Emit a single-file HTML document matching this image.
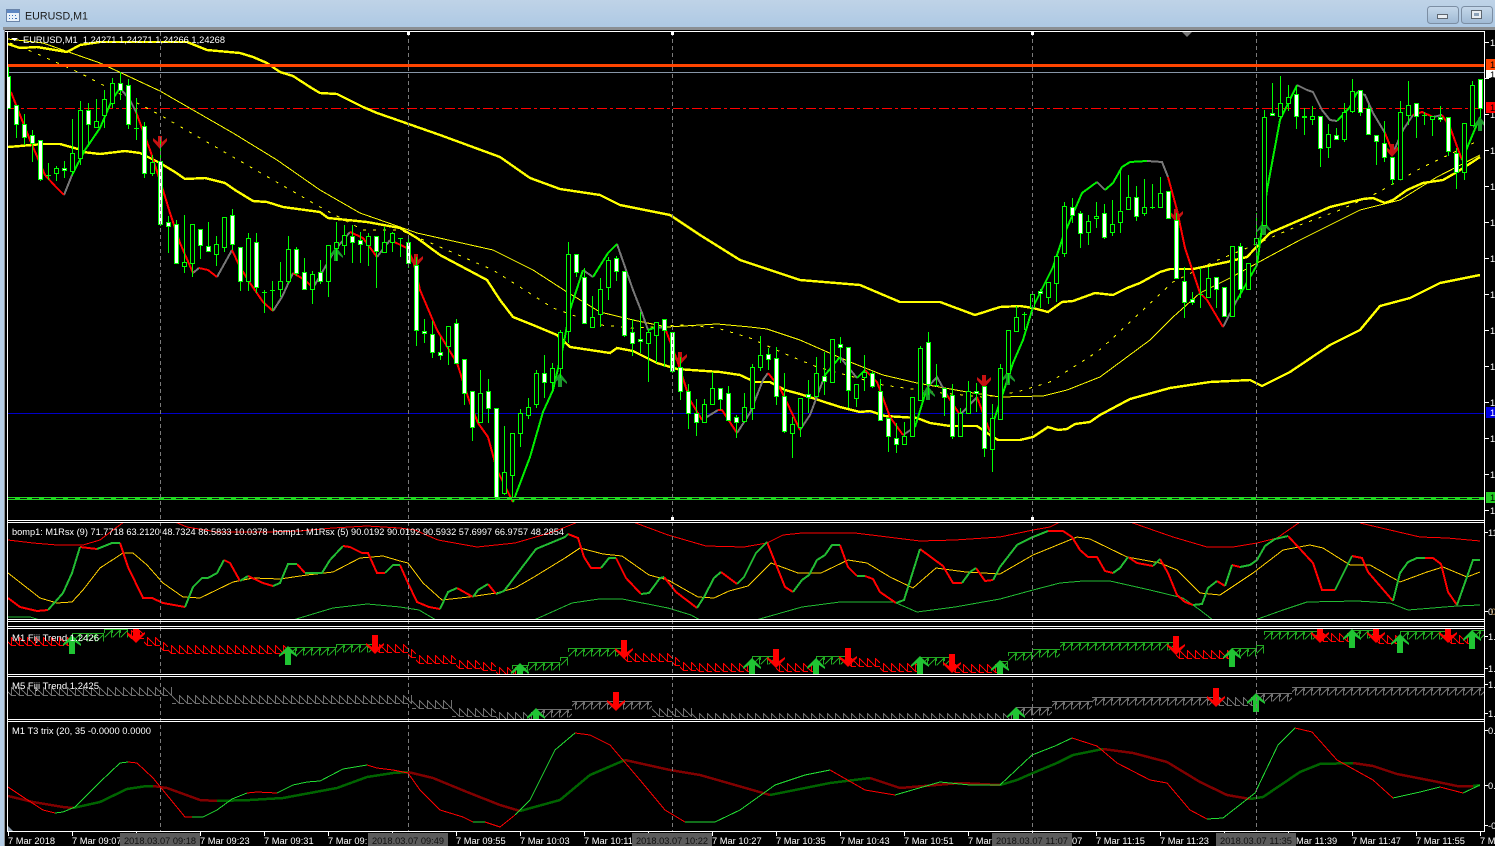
<!DOCTYPE html>
<html><head><meta charset="utf-8"><title>EURUSD,M1</title>
<style>
html,body{margin:0;padding:0;width:1495px;height:846px;overflow:hidden;background:#000}
svg{display:block}
text{font-family:"Liberation Sans",sans-serif;font-size:9.3px;fill:#fff;white-space:pre}
.l{fill:none;shape-rendering:crispEdges}
.p{fill:none;shape-rendering:crispEdges;stroke-width:1}
</style></head><body>
<svg width="1495" height="846" viewBox="0 0 1495 846" xmlns="http://www.w3.org/2000/svg">
<defs>
<linearGradient id="tb" x1="0" y1="0" x2="0" y2="1"><stop offset="0" stop-color="#bfd3e7"/><stop offset="1" stop-color="#aec9e4"/></linearGradient>
<linearGradient id="bt" x1="0" y1="0" x2="0" y2="1"><stop offset="0" stop-color="#c6d8ea"/><stop offset=".5" stop-color="#b2c9df"/><stop offset="1" stop-color="#9fb9d4"/></linearGradient>
<clipPath id="c1"><rect x="8" y="32" width="1476" height="488"/></clipPath>
<clipPath id="c2"><rect x="8" y="523" width="1476" height="96"/></clipPath>
<clipPath id="c3"><rect x="8" y="629" width="1476" height="45"/></clipPath>
<clipPath id="c4"><rect x="8" y="677" width="1476" height="42"/></clipPath>
<clipPath id="c5"><rect x="8" y="722" width="1476" height="109"/></clipPath>
<pattern id="fr" patternUnits="userSpaceOnUse" width="8" height="10"><path class="p" d="M3.5 0V8.5H8M3.5 .5L8 5M0 5L3.5 8.5" stroke="#f00"/></pattern>
<pattern id="fg" patternUnits="userSpaceOnUse" width="8" height="10"><path class="p" d="M.5 8.5L7.5 1.5V8.5M0 .5H8M.5 .5V4" stroke="#22a822"/></pattern>
<pattern id="fk" patternUnits="userSpaceOnUse" width="8" height="10"><path class="p" d="M3.5 0V8.5H8M3.5 .5L8 5M0 5L3.5 8.5" stroke="#707070"/></pattern>
<pattern id="fh" patternUnits="userSpaceOnUse" width="8" height="10"><path class="p" d="M.5 8.5L7.5 1.5V8.5M0 .5H8M.5 .5V4" stroke="#707070"/></pattern>
<path id="au" d="M0 0L9 9V11L3 7V19H-3V7L-9 11V9Z" fill="#20c433"/>
<path id="ad" d="M0 0L-9 -9V-11L-3 -7V-19H3V-7L9 -11V-9Z" fill="#f00"/>
<path id="su" d="M0 0L7 9V11L2 7V14H-2V7L-7 11V9Z" fill="#1c9a2c"/>
<path id="sd" d="M0 0L-7 -8V-11L-2 -7V-13H2V-7L7 -11V-8Z" fill="#c81212"/>
</defs>

<rect width="1495" height="846" fill="#000"/>
<!-- title bar -->
<rect width="1495" height="27" fill="url(#tb)"/>
<rect x="0" y="27" width="5" height="819" fill="#b5cde5"/>
<rect x="3" y="27" width="1492" height="3" fill="#8b8f93"/>
<rect x="4" y="27" width="1" height="819" fill="#8b8f93"/>
<g>
<rect x="6.5" y="9.5" width="13" height="12" fill="#e8f1fa" stroke="#6a84a8"/>
<rect x="7" y="10" width="12" height="3" fill="#5e88c4"/>
<path d="M9 15h1v1h-1zM12 15h1v1h-1zM15 15h1v1h-1zM9 18h1v1h-1zM12 18h1v1h-1zM15 18h2v1h-2z" fill="#3b6fb8"/>
</g>
<text x="25" y="19.5" style="font-size:11px;fill:#1a1a1a" textLength="63" lengthAdjust="spacingAndGlyphs">EURUSD,M1</text>
<rect x="1427.5" y="6.5" width="31" height="17" rx="3" fill="url(#bt)" stroke="#7c8ea3"/>
<rect x="1437.5" y="14.5" width="10" height="4" fill="#e8edf2" stroke="#5d6670"/>
<rect x="1461.5" y="6.5" width="31" height="17" rx="3" fill="url(#bt)" stroke="#7c8ea3"/>
<rect x="1471.5" y="10.5" width="10" height="8" fill="#e8edf2" stroke="#5d6670"/>
<rect x="1474" y="13" width="5" height="3" fill="#8da3ba"/>

<!-- MAIN CHART -->
<g clip-path="url(#c1)">
<path class="l" d="M8 72.5H1484" stroke="#8796a8"/>
<path class="l" d="M8 108.5H1484" stroke="#f00" stroke-dasharray="10 3 3 3"/>
<path class="l" d="M8 413.5H1484" stroke="#0000c8"/>
<!-- thin yellow -->
<path class="l" stroke="#ffff00" d="M8 39L43 43L100 63L160 91L233 133L277 160L320 190L360 213L400 227L417 233L493 250L533 270L567 292L600 312L633 320L667 327L717 324L750 327L767 329L800 340L850 362L883 375L917 383L967 392L1000 397L1043 396L1067 390L1100 377L1150 340L1173 317L1200 293L1230 278L1270 256L1300 240L1360 210L1400 200L1437 177L1480 155"/>
<path class="l" stroke="#ffff00" stroke-dasharray="3 7" d="M10 43L33 52L80 73L160 115L233 157L320 207L363 230L400 230L440 247L493 270L553 308L600 325L633 328L683 325L717 328L750 338L783 353L817 367L883 385L933 392L983 397L1017 392L1050 382L1097 352L1113 338L1173 282L1213 262L1247 248L1300 225L1340 210L1377 193L1423 167L1480 140"/>
<!-- thick yellow -->
<path class="l" stroke="#ffff00" stroke-width="2.4" d="M8 44L20 48L37 47L67 52L80 45L100 42L187 42L207 50L240 53L253 57L267 63L280 72L293 76L310 87L320 93L337 94L363 107L377 113L400 121L440 135L500 157L530 178L560 189L600 195L620 205L670 215L700 235L740 260L800 280L860 285L900 302L940 302L975 315L1000 307L1020 306L1033 308L1048 312L1062 302L1073 301L1095 293L1113 295L1127 288L1140 283L1160 272L1170 269L1193 269L1227 262L1247 257L1263 240L1270 233L1300 220L1330 207L1363 199L1373 198L1385 203L1393 200L1407 190L1423 183L1443 180L1457 172L1480 157"/>
<path class="l" stroke="#ffff00" stroke-width="2.4" d="M8 147L20 146L43 144L60 144L78 149L83 152L100 154L125 151L140 153L160 163L175 172L185 179L205 178L225 183L235 190L253 201L267 202L283 207L320 212L328 218L367 222L400 228L417 238L440 255L487 280L500 300L513 317L533 325L557 335L570 347L610 353L617 348L633 351L657 363L677 369L720 372L740 375L755 382L770 382L785 390L800 394L840 407L860 412L870 411L885 416L917 418L930 423L950 426L977 426L990 435L998 440L1020 440L1033 437L1048 427L1058 430L1067 429L1075 424L1090 422L1100 415L1130 399L1170 388L1210 382L1250 380L1262 386L1290 372L1330 345L1360 330L1380 306L1410 298L1440 283L1480 275"/>
<!-- zigzag -->
<path class="l" stroke="#777" stroke-width="2" d="M64 195L72 175M120 88L130 100L136 112M193 273L199 268M217 277L232 250M273 311L282 297L293 273M313 288L335 250L350 232M377 257L390 240M583 270L593 277M617 244L633 290L642 313L648 330M657 327L665 328M702 420L718 410M737 433L750 413L763 380L768 373M800 430L810 415L825 375M840 357L857 378M903 435L915 427M927 388L937 377L947 395M960 415L977 397M1097 182L1105 190M1147 161L1162 162L1168 177M1223 327L1237 300M1297 85L1307 90L1313 92L1322 110L1330 120L1337 121M1357 92L1365 95L1373 113L1385 133M1393 153L1403 130L1413 115M1433 117L1442 115"/>
<path class="l" stroke="#f00" stroke-width="2" d="M11 92L20 115L30 140L45 175L56 187L64 195M136 112L150 150L163 190L170 213L180 243L193 273M199 268L208 270L217 277M232 250L240 267L250 283L263 302L273 311M293 273L305 280L313 288M350 232L363 238L377 257M390 240L407 248L413 260L420 290L437 330L457 363L470 403L478 423L488 437L497 470L513 502M665 328L677 360L690 400L702 420M718 410L722 410L737 433M768 373L780 388L800 430M865 370L877 382L890 417L903 435M947 395L960 415M977 397L990 432M1168 177L1177 210L1185 248L1200 293L1207 300L1223 327M1385 133L1393 153M1413 115L1422 112L1433 117M1442 115L1450 127L1462 160"/>
<path class="l" stroke="#00f000" stroke-width="2" d="M72 175L85 150L100 128L112 100L120 88M513 502L530 457L543 412L553 390L563 347L570 310L583 270M593 277L608 253L617 244M648 330L657 327M825 375L840 357M857 378L865 370M915 427L927 388M990 432L1013 363L1023 340L1033 307L1053 267L1063 237L1082 193L1097 182M1105 190L1113 183L1122 167L1130 162L1147 161M1237 300L1257 265L1267 190L1280 120L1297 85M1337 121L1350 107L1357 92M1462 160L1480 117"/>
<!-- small arrows -->
<use href="#sd" x="160" y="149"/><use href="#sd" x="416" y="267"/><use href="#sd" x="680" y="365"/><use href="#sd" x="984" y="388"/><use href="#sd" x="1176" y="222"/><use href="#sd" x="1392" y="157"/>
<use href="#su" x="336" y="247"/><use href="#su" x="560" y="373"/><use href="#su" x="928" y="386"/><use href="#su" x="1008" y="371"/><use href="#su" x="1264" y="221"/><use href="#su" x="1480" y="117"/>
<!-- wicks -->
<path class="l" stroke="#00ff00" d="M8.5 64V108M16.5 105V138M24.5 114V145M32.5 130V162M40.5 140V181M48.5 163V180M56.5 166V181M64.5 161V178M72.5 119V176M80.5 101V165M88.5 103V145M96.5 99V128M104.5 90V128M112.5 78V108M120.5 72V100M128.5 79V129M136.5 98V140M144.5 122V178M152.5 155V176M160.5 140V226M168.5 216V253M176.5 220V263M184.5 215V273M192.5 224V277M200.5 229V259M208.5 222V251M216.5 236V266M224.5 217V252M232.5 209V250M240.5 247V291M248.5 233V291M256.5 233V293M264.5 290V313M272.5 281V311M280.5 262V297M288.5 236V284M296.5 247V276M304.5 258V289M312.5 271V304M320.5 260V284M328.5 245V297M336.5 222V261M344.5 225V255M352.5 225V263M360.5 232V263M368.5 233V266M376.5 236V288M384.5 227V252M392.5 232V252M400.5 238V257M408.5 238V268M416.5 257V346M424.5 319V343M432.5 321V358M440.5 337V360M448.5 326V365M456.5 319V363M464.5 359V405M472.5 391V441M480.5 370V422M488.5 379V423M496.5 408V498M504.5 426V495M512.5 433V497M520.5 409V447M528.5 398V419M536.5 370V408M544.5 355V398M552.5 363V393M560.5 330V378M568.5 242V343M576.5 254V277M584.5 268V323M592.5 296V327M600.5 278V327M608.5 257V300M616.5 256V281M624.5 271V337M632.5 319V356M640.5 312V353M648.5 330V382M656.5 322V363M664.5 319V367M672.5 332V373M680.5 357V400M688.5 384V429M696.5 399V436M704.5 399V422M712.5 372V404M720.5 388V410M728.5 386V420M736.5 415V438M744.5 393V423M752.5 364V420M760.5 336V371M768.5 348V370M776.5 347V405M784.5 373V433M792.5 417V458M800.5 398V437M808.5 380V413M816.5 357V396M824.5 352V395M832.5 339V382M840.5 337V363M848.5 347V408M856.5 384V407M864.5 355V391M872.5 371V388M880.5 379V420M888.5 418V452M896.5 423V453M904.5 422V444M912.5 397V436M920.5 346V400M928.5 332V395M936.5 364V387M944.5 388V416M952.5 384V439M960.5 408V436M968.5 381V413M976.5 383V412M984.5 386V457M992.5 404V472M1000.5 364V419M1008.5 330V383M1016.5 306V331M1024.5 312V330M1032.5 294V307M1040.5 289V308M1048.5 282V304M1056.5 256V302M1064.5 202V257M1072.5 198V223M1080.5 211V248M1088.5 215V245M1096.5 202V228M1104.5 204V239M1112.5 200V236M1120.5 168V233M1128.5 175V209M1136.5 186V221M1144.5 179V216M1152.5 184V209M1160.5 177V207M1168.5 191V218M1176.5 213V278M1184.5 267V318M1192.5 292V305M1200.5 268V308M1208.5 267V297M1216.5 277V308M1224.5 287V316M1232.5 246V316M1240.5 243V298M1248.5 263V289M1256.5 213V265M1264.5 110V225M1272.5 83V115M1280.5 76V120M1288.5 85V111M1296.5 85V129M1304.5 108V135M1312.5 106V125M1320.5 116V167M1328.5 124V158M1336.5 128V139M1344.5 103V142M1352.5 79V113M1360.5 90V116M1368.5 105V134M1376.5 135V165M1384.5 121V162M1392.5 157V185M1400.5 101V179M1408.5 81V125M1416.5 103V138M1424.5 112V125M1432.5 116V136M1440.5 106V122M1448.5 117V156M1456.5 148V189M1464.5 123V180M1472.5 81V125M1480.5 79V118"/>
<!-- dojis -->
<path class="l" stroke="#00ff00" d="M46 175.5h5M134 128.5h5M262 292.5h5M270 290.5h5M398 238.5h5M934 385.5h5M1022 314.5h5M1150 207.5h5M1198 294.5h5M1422 115.5h5"/>
<!-- black bodies -->
<path fill="#000" stroke="#00ff00" style="shape-rendering:crispEdges" d="M54.5 168.5h4v5h-4zM70.5 153.5h4v18h-4zM78.5 110.5h4v48h-4zM94.5 121.5h4v6h-4zM102.5 99.5h4v16h-4zM110.5 83.5h4v20h-4zM150.5 162.5h4v11h-4zM182.5 262.5h4v4h-4zM190.5 224.5h4v39h-4zM214.5 244.5h4v10h-4zM222.5 217.5h4v30h-4zM246.5 238.5h4v43h-4zM278.5 281.5h4v8h-4zM286.5 249.5h4v32h-4zM310.5 274.5h4v15h-4zM326.5 245.5h4v36h-4zM334.5 242.5h4v6h-4zM342.5 235.5h4v10h-4zM366.5 236.5h4v9h-4zM382.5 242.5h4v10h-4zM390.5 233.5h4v9h-4zM446.5 326.5h4v20h-4zM478.5 393.5h4v29h-4zM502.5 472.5h4v21h-4zM510.5 433.5h4v42h-4zM518.5 413.5h4v20h-4zM526.5 407.5h4v8h-4zM534.5 373.5h4v31h-4zM550.5 368.5h4v14h-4zM558.5 332.5h4v36h-4zM566.5 254.5h4v77h-4zM590.5 317.5h4v10h-4zM598.5 289.5h4v25h-4zM606.5 260.5h4v27h-4zM646.5 332.5h4v11h-4zM654.5 322.5h4v13h-4zM702.5 404.5h4v18h-4zM710.5 388.5h4v16h-4zM742.5 407.5h4v14h-4zM750.5 367.5h4v41h-4zM758.5 355.5h4v12h-4zM790.5 424.5h4v9h-4zM798.5 398.5h4v29h-4zM814.5 373.5h4v23h-4zM830.5 339.5h4v43h-4zM854.5 384.5h4v14h-4zM862.5 372.5h4v5h-4zM902.5 436.5h4v8h-4zM910.5 397.5h4v39h-4zM918.5 348.5h4v52h-4zM958.5 413.5h4v23h-4zM966.5 391.5h4v22h-4zM990.5 418.5h4v31h-4zM998.5 368.5h4v51h-4zM1006.5 330.5h4v43h-4zM1014.5 317.5h4v14h-4zM1030.5 294.5h4v13h-4zM1046.5 282.5h4v15h-4zM1054.5 256.5h4v27h-4zM1062.5 206.5h4v47h-4zM1086.5 221.5h4v11h-4zM1094.5 216.5h4v2h-4zM1110.5 224.5h4v8h-4zM1118.5 211.5h4v11h-4zM1126.5 197.5h4v12h-4zM1142.5 207.5h4v6h-4zM1158.5 193.5h4v14h-4zM1206.5 278.5h4v19h-4zM1230.5 246.5h4v70h-4zM1246.5 263.5h4v26h-4zM1254.5 238.5h4v6h-4zM1262.5 117.5h4v108h-4zM1278.5 103.5h4v13h-4zM1286.5 97.5h4v6h-4zM1310.5 116.5h4v3h-4zM1326.5 134.5h4v13h-4zM1342.5 112.5h4v27h-4zM1350.5 91.5h4v20h-4zM1398.5 112.5h4v67h-4zM1406.5 105.5h4v10h-4zM1430.5 116.5h4v3h-4zM1462.5 123.5h4v49h-4zM1470.5 85.5h4v40h-4z"/>
<!-- white bodies -->
<path fill="#fff" stroke="#00ff00" style="shape-rendering:crispEdges" d="M6.5 76.5h4v32h-4zM14.5 105.5h4v19h-4zM22.5 124.5h4v13h-4zM30.5 135.5h4v8h-4zM38.5 140.5h4v39h-4zM62.5 168.5h4v2h-4zM86.5 110.5h4v14h-4zM118.5 83.5h4v7h-4zM126.5 85.5h4v39h-4zM142.5 126.5h4v47h-4zM158.5 161.5h4v63h-4zM166.5 222.5h4v4h-4zM174.5 224.5h4v39h-4zM198.5 229.5h4v16h-4zM206.5 246.5h4v5h-4zM230.5 215.5h4v29h-4zM238.5 247.5h4v34h-4zM254.5 242.5h4v45h-4zM294.5 249.5h4v24h-4zM302.5 272.5h4v17h-4zM318.5 272.5h4v9h-4zM350.5 236.5h4v6h-4zM358.5 240.5h4v4h-4zM374.5 236.5h4v15h-4zM406.5 242.5h4v21h-4zM414.5 265.5h4v65h-4zM422.5 331.5h4v2h-4zM430.5 334.5h4v18h-4zM438.5 352.5h4v3h-4zM454.5 323.5h4v40h-4zM462.5 359.5h4v34h-4zM470.5 391.5h4v36h-4zM486.5 391.5h4v17h-4zM494.5 408.5h4v90h-4zM542.5 373.5h4v9h-4zM574.5 254.5h4v18h-4zM582.5 277.5h4v46h-4zM614.5 258.5h4v13h-4zM622.5 271.5h4v64h-4zM630.5 332.5h4v11h-4zM638.5 339.5h4v2h-4zM662.5 319.5h4v11h-4zM670.5 332.5h4v39h-4zM678.5 367.5h4v24h-4zM686.5 391.5h4v22h-4zM694.5 413.5h4v9h-4zM718.5 388.5h4v11h-4zM726.5 393.5h4v27h-4zM734.5 417.5h4v5h-4zM766.5 354.5h4v5h-4zM774.5 358.5h4v38h-4zM782.5 396.5h4v35h-4zM806.5 394.5h4v3h-4zM822.5 376.5h4v5h-4zM838.5 344.5h4v3h-4zM846.5 347.5h4v43h-4zM870.5 373.5h4v13h-4zM878.5 391.5h4v29h-4zM886.5 418.5h4v18h-4zM894.5 438.5h4v6h-4zM926.5 342.5h4v42h-4zM942.5 388.5h4v9h-4zM950.5 395.5h4v41h-4zM974.5 391.5h4v2h-4zM982.5 386.5h4v62h-4zM1038.5 291.5h4v2h-4zM1070.5 207.5h4v8h-4zM1078.5 213.5h4v20h-4zM1102.5 213.5h4v24h-4zM1134.5 197.5h4v19h-4zM1166.5 191.5h4v27h-4zM1174.5 220.5h4v58h-4zM1182.5 281.5h4v21h-4zM1190.5 299.5h4v3h-4zM1214.5 277.5h4v12h-4zM1222.5 287.5h4v29h-4zM1238.5 246.5h4v43h-4zM1270.5 113.5h4v2h-4zM1294.5 94.5h4v22h-4zM1302.5 116.5h4v1h-4zM1318.5 116.5h4v32h-4zM1334.5 135.5h4v4h-4zM1358.5 90.5h4v22h-4zM1366.5 108.5h4v26h-4zM1374.5 135.5h4v6h-4zM1382.5 143.5h4v14h-4zM1390.5 157.5h4v22h-4zM1414.5 103.5h4v13h-4zM1438.5 117.5h4v2h-4zM1446.5 117.5h4v34h-4zM1454.5 153.5h4v19h-4zM1478.5 79.5h4v29h-4z"/>
<rect x="8" y="64" width="1476" height="3" fill="#ff4500"/>
<rect x="8" y="497" width="1476" height="3" fill="#22dd22"/>
<path class="l" d="M8 498.5H1484" stroke="#111" stroke-dasharray="7 5"/>
</g>

<!-- PANEL 2 RSX -->
<g clip-path="url(#c2)">
<path class="l" stroke="#f00" d="M8 540L33 543L57 545L83 545L100 540L113 530L124 522M175 522L187 527L217 532L267 532L300 531L333 528L367 526L400 528L415 530L438 540L477 547L515 543L553 532L578 522M633 522L668 535L706 546L744 547L767 543L783 535L802 533L855 533L920 541L955 540L1000 537L1033 530L1050 527L1060 522M1130 522L1173 537L1207 547L1233 547L1257 543L1277 538L1300 522M1360 523L1420 537L1447 538L1480 541"/>
<path class="l" stroke="#ffd000" d="M8 573L40 598L57 603L72 602L83 590L100 568L123 553L133 553L147 565L163 583L183 597L200 598L233 582L253 578L280 579L307 575L333 572L360 558L383 556L400 561L408 563L423 583L442 600L469 597L496 593L515 588L534 577L565 558L580 548L603 554L622 556L649 575L668 580L698 597L714 598L729 591L748 586L771 563L798 573L821 573L848 560L867 563L890 577L913 588L936 568L966 572L1000 574L1033 555L1077 537L1090 539L1127 557L1160 563L1177 570L1200 593L1220 595L1253 573L1283 550L1310 545L1323 548L1350 565L1370 565L1400 582L1427 572L1443 567L1467 577L1480 572"/>
<path class="l" stroke="#22bb33" d="M8 617L30 617L40 620M293 620L333 608L367 604L400 607L419 610L436 620M534 620L572 603L599 599L622 599L668 608L691 615L700 620M756 620L802 607L840 602L894 602L917 612L955 607L1000 599L1033 590L1060 583L1083 581L1110 581L1150 590L1183 598L1200 610L1213 620M1255 620L1283 610L1307 602L1357 601L1390 603L1408 610L1457 606L1480 605"/>
<path class="l" stroke="#f00" stroke-width="2" d="M8 598L20 607L37 611L48 610M80 547L97 549M120 543L128 567L143 598L152 598L163 603L185 607M224 560L230 563L240 581M248 576L263 583L273 586M297 564L305 573M343 546L350 547L362 553L368 553L377 573L385 573M400 565L408 583L417 602L429 607L440 609M457 588L473 597M488 584L496 594M568 534L578 538L584 557L591 568L601 568M616 558L626 578L641 594M664 577L676 592L697 608M721 572L737 584M767 542L785 587L793 592M840 545L848 567L857 576M865 576L873 579L880 592L896 603M920 549L943 566L953 583L962 583M976 568L985 581L993 580M1048 531L1063 531L1072 537L1080 550L1088 557L1097 557L1105 571L1113 573M1128 557L1137 563L1153 566M1160 559L1168 573L1177 595L1185 602L1193 605M1217 581L1225 586M1232 565L1240 567M1288 536L1313 563L1322 590L1335 590M1352 556L1362 558L1368 572L1393 601M1425 558L1433 558L1441 564L1448 592L1457 605"/>
<path class="l" stroke="#22bb33" stroke-width="2" d="M48 610L63 593L72 573L80 547M97 549L112 543L120 543M185 607L193 587L202 578L208 578L217 573L224 560M240 581L248 576M273 586L280 583L288 564L297 564M305 573L322 573L330 560L343 546M385 573L393 565L400 565M440 609L448 592L457 588M473 597L478 590L488 584M496 594L504 591L536 549L565 537L568 534M601 568L609 558L616 558M641 594L649 593L660 578L664 577M697 608L704 597L714 578L721 572M737 584L744 577L756 553L767 542M793 592L802 580L809 575L817 560L825 555L832 545L840 545M857 576L865 576M896 603L904 600L920 549M962 583L970 572L976 568M993 580L1000 567L1017 545L1033 537L1048 531M1113 573L1120 568L1128 557M1153 566L1160 559M1193 605L1202 604L1208 588L1217 581M1225 586L1232 565M1240 567L1250 565L1257 560L1265 546L1275 539L1288 536M1335 590L1352 556M1393 601L1400 573L1408 562L1417 558L1425 558M1457 605L1473 560L1480 560"/>
</g>

<!-- PANEL 3 FIJI M1 -->
<g clip-path="url(#c3)">
<rect transform="translate(0 637)" x="8" width="64" height="10" fill="url(#fr)"/>
<rect transform="translate(0 633)" x="72" width="32" height="10" fill="url(#fg)"/>
<rect transform="translate(0 629)" x="104" width="24" height="10" fill="url(#fg)"/>
<rect transform="translate(0 630)" x="128" width="16" height="10" fill="url(#fr)"/>
<rect transform="translate(0 637)" x="144" width="16" height="10" fill="url(#fr)"/>
<rect transform="translate(0 642)" x="160" width="8" height="10" fill="url(#fr)"/>
<rect transform="translate(0 645)" x="168" width="120" height="10" fill="url(#fr)"/>
<rect transform="translate(0 647)" x="288" width="48" height="10" fill="url(#fg)"/>
<rect transform="translate(0 644)" x="336" width="40" height="10" fill="url(#fg)"/>
<rect transform="translate(0 644)" x="376" width="32" height="10" fill="url(#fr)"/>
<rect transform="translate(0 649)" x="408" width="8" height="10" fill="url(#fr)"/>
<rect transform="translate(0 655)" x="416" width="40" height="10" fill="url(#fr)"/>
<rect transform="translate(0 660)" x="456" width="24" height="10" fill="url(#fr)"/>
<rect transform="translate(0 662)" x="480" width="16" height="10" fill="url(#fr)"/>
<rect transform="translate(0 667)" x="496" width="24" height="10" fill="url(#fr)"/>
<rect transform="translate(0 665)" x="512" width="16" height="10" fill="url(#fg)"/>
<rect transform="translate(0 662)" x="528" width="32" height="10" fill="url(#fg)"/>
<rect transform="translate(0 657)" x="560" width="8" height="10" fill="url(#fg)"/>
<rect transform="translate(0 648)" x="568" width="56" height="10" fill="url(#fg)"/>
<rect transform="translate(0 653)" x="624" width="48" height="10" fill="url(#fr)"/>
<rect transform="translate(0 657)" x="672" width="8" height="10" fill="url(#fr)"/>
<rect transform="translate(0 662)" x="680" width="16" height="10" fill="url(#fr)"/>
<rect transform="translate(0 663)" x="696" width="56" height="10" fill="url(#fr)"/>
<rect transform="translate(0 656)" x="752" width="24" height="10" fill="url(#fg)"/>
<rect transform="translate(0 663)" x="776" width="40" height="10" fill="url(#fr)"/>
<rect transform="translate(0 656)" x="816" width="32" height="10" fill="url(#fg)"/>
<rect transform="translate(0 658)" x="848" width="32" height="10" fill="url(#fr)"/>
<rect transform="translate(0 663)" x="880" width="40" height="10" fill="url(#fr)"/>
<rect transform="translate(0 657)" x="920" width="32" height="10" fill="url(#fg)"/>
<rect transform="translate(0 664)" x="952" width="48" height="10" fill="url(#fr)"/>
<rect transform="translate(0 661)" x="1000" width="8" height="10" fill="url(#fg)"/>
<rect transform="translate(0 652)" x="1008" width="24" height="10" fill="url(#fg)"/>
<rect transform="translate(0 649)" x="1032" width="28" height="10" fill="url(#fg)"/>
<rect transform="translate(0 642)" x="1060" width="116" height="10" fill="url(#fg)"/>
<rect transform="translate(0 650)" x="1176" width="56" height="10" fill="url(#fr)"/>
<rect transform="translate(0 648)" x="1232" width="24" height="10" fill="url(#fg)"/>
<rect transform="translate(0 645)" x="1256" width="8" height="10" fill="url(#fg)"/>
<rect transform="translate(0 631)" x="1264" width="56" height="10" fill="url(#fg)"/>
<rect transform="translate(0 633)" x="1320" width="32" height="10" fill="url(#fr)"/>
<rect transform="translate(0 630)" x="1352" width="24" height="10" fill="url(#fg)"/>
<rect transform="translate(0 635)" x="1376" width="24" height="10" fill="url(#fr)"/>
<rect transform="translate(0 631)" x="1400" width="48" height="10" fill="url(#fg)"/>
<rect transform="translate(0 635)" x="1448" width="24" height="10" fill="url(#fr)"/>
<rect transform="translate(0 630)" x="1472" width="12" height="10" fill="url(#fg)"/>
<use href="#au" x="72" y="635"/><use href="#au" x="288" y="646"/><use href="#au" x="520" y="663"/><use href="#au" x="752" y="658"/><use href="#au" x="816" y="658"/><use href="#au" x="920" y="656"/><use href="#au" x="1000" y="660"/><use href="#au" x="1232" y="648"/><use href="#au" x="1352" y="629"/><use href="#au" x="1400" y="634"/><use href="#au" x="1472" y="630"/>
<use href="#ad" x="136" y="643"/><use href="#ad" x="375" y="654"/><use href="#ad" x="624" y="659"/><use href="#ad" x="776" y="668"/><use href="#ad" x="848" y="667"/><use href="#ad" x="952" y="673"/><use href="#ad" x="1176" y="655"/><use href="#ad" x="1320" y="643"/><use href="#ad" x="1376" y="643"/><use href="#ad" x="1448" y="643"/>
</g>

<!-- PANEL 4 FIJI M5 -->
<g clip-path="url(#c4)">
<rect transform="translate(0 687)" x="8" width="164" height="10" fill="url(#fk)"/>
<rect transform="translate(0 695)" x="172" width="240" height="10" fill="url(#fk)"/>
<rect transform="translate(0 700)" x="412" width="40" height="10" fill="url(#fk)"/>
<rect transform="translate(0 708)" x="452" width="44" height="10" fill="url(#fk)"/>
<rect transform="translate(0 712)" x="496" width="40" height="10" fill="url(#fk)"/>
<rect transform="translate(0 709)" x="536" width="36" height="10" fill="url(#fh)"/>
<rect transform="translate(0 701)" x="572" width="80" height="10" fill="url(#fh)"/>
<rect transform="translate(0 708)" x="652" width="40" height="10" fill="url(#fk)"/>
<rect transform="translate(0 713)" x="692" width="324" height="10" fill="url(#fk)"/>
<rect transform="translate(0 707)" x="1016" width="36" height="10" fill="url(#fh)"/>
<rect transform="translate(0 701)" x="1052" width="40" height="10" fill="url(#fh)"/>
<rect transform="translate(0 697)" x="1092" width="124" height="10" fill="url(#fh)"/>
<rect transform="translate(0 697)" x="1216" width="40" height="10" fill="url(#fk)"/>
<rect transform="translate(0 693)" x="1256" width="36" height="10" fill="url(#fh)"/>
<rect transform="translate(0 687)" x="1292" width="192" height="10" fill="url(#fh)"/>
<use href="#au" x="536" y="708"/><use href="#au" x="1016" y="707"/><use href="#au" x="1256" y="693"/>
<use href="#ad" x="616" y="711"/><use href="#ad" x="1216" y="707"/>
</g>

<!-- PANEL 5 TRIX -->
<g clip-path="url(#c5)">
<path class="l" stroke="#800000" stroke-width="2.5" d="M8 796L33 802L63 807L73 808M153 786L167 788L200 800L217 801M408 772L433 778L467 792L500 805L520 811M625 760L670 770L700 775L770 795M870 778L900 788L960 783L1000 785M1103 749L1133 753L1167 762L1200 782L1227 795L1250 799M1353 763L1373 766L1397 774L1433 781L1457 786L1473 786"/>
<path class="l" stroke="#006400" stroke-width="2.5" d="M73 808L100 802L127 789L147 786L153 786M217 801L250 800L283 798L310 793L337 788L367 777L393 773L408 772M520 811L560 800L590 775L625 760M770 795L830 783L870 778M1000 785L1017 780L1033 773L1057 763L1073 755L1103 749M1250 799L1263 797L1300 772L1320 764L1353 763M1473 786L1480 785"/>
<path class="l" stroke="#f00" d="M8 787L23 797L43 810L55 813M128 762L137 763L153 778L185 817L192 817M247 793L257 792L277 793M367 765L377 768L393 770L408 773L420 790L440 810L463 817L473 822M485 822L500 827L515 815M575 733L590 735L610 745L640 780L665 810L685 822M830 770L865 790L895 795M1072 738L1097 746L1117 763L1150 780L1167 783L1190 810L1207 819M1295 728L1312 732L1337 760L1373 780L1393 798M1440 787L1463 793"/>
<path class="l" stroke="#22dd33" d="M55 813L63 812L75 807L100 782L120 763L128 762M192 817L203 817L217 810L232 799L247 793M277 793L293 785L307 782L320 781L343 769L367 765M473 822L485 822M515 815L530 800L555 750L575 733M685 822L715 822L740 810L775 785L805 775L830 770M895 795L940 782L970 785L1000 785L1032 755L1055 746L1072 738M1207 819L1223 818L1255 793L1278 745L1295 728M1393 798L1420 792L1440 787M1463 793L1480 785"/>
<path d="M8 826L13 831H8Z" fill="#8899aa"/>
</g>

<!-- grid verticals -->
<path class="l" stroke="#7a7a7a" stroke-dasharray="4 3" d="M160.5 32V831M408.5 32V831M672.5 32V831M1032.5 32V831M1256.5 32V831"/>

<!-- frames -->
<path class="l" stroke="#fff" d="M5 31.5H1485M7.5 31V832M1484.5 31V832M7 520.5H1485M7 522.5H1485M7 619.5H1485M7 621.5H1485M7 626.5H1485M7 628.5H1485M7 674.5H1485M7 676.5H1485M7 719.5H1485M7 721.5H1485M7 831.5H1485"/>
<path d="M407 32h3v3h-3zM671 32h3v3h-3zM1031 32h3v3h-3zM671 517h3v3h-3zM1031 517h3v3h-3z" fill="#fff"/>
<path d="M1182 32h10l-5 5z" fill="#777"/>

<!-- labels in charts -->
<path d="M11 38h7l-3.5 3z" fill="#fff"/>
<text x="23" y="43" textLength="202" lengthAdjust="spacingAndGlyphs" xml:space="preserve">EURUSD,M1  1,24271 1,24271 1,24266 1,24268</text>
<text x="12" y="535" textLength="552" lengthAdjust="spacingAndGlyphs" xml:space="preserve">bomp1: M1Rsx (9) 71.7718 63.2120 48.7324 86.5833 10.0378  bomp1: M1Rsx (5) 90.0192 90.0192 90.5932 57.6997 66.9757 48.2854</text>
<text x="12" y="641" textLength="87" lengthAdjust="spacingAndGlyphs">M1 Fiji Trend 1.2426</text>
<text x="12" y="689" textLength="87" lengthAdjust="spacingAndGlyphs">M5 Fiji Trend 1.2425</text>
<text x="12" y="734" textLength="139" lengthAdjust="spacingAndGlyphs">M1 T3 trix (20, 35 -0.0000 0.0000</text>

<!-- right axis -->
<path class="l" stroke="#fff" d="M1485 42.5h4M1485 78.5h4M1485 114.5h4M1485 150.5h4M1485 186.5h4M1485 222.5h4M1485 258.5h4M1485 294.5h4M1485 330.5h4M1485 366.5h4M1485 402.5h4M1485 438.5h4M1485 474.5h4M1485 510.5h4M1485 532.5h3M1485 611.5h3M1485 636.5h3M1485 668.5h3M1485 684.5h3M1485 713.5h3M1485 730.5h3M1485 785.5h3M1485 825.5h3"/>
<text x="1490" y="46">1</text><text x="1490" y="118">1</text><text x="1490" y="154">1</text><text x="1490" y="190">1</text><text x="1490" y="226">1</text><text x="1490" y="262">1</text><text x="1490" y="298">1</text><text x="1490" y="334">1</text><text x="1490" y="370">1</text><text x="1490" y="406">1</text><text x="1490" y="442">1</text><text x="1490" y="478">1</text><text x="1490" y="514">1</text>
<rect x="1486" y="59" width="9" height="11" fill="#ff4500"/><text x="1490" y="68" style="fill:#000">1</text>
<rect x="1486" y="70" width="9" height="8" fill="#fff"/><text x="1490" y="78" style="fill:#000">1</text>
<rect x="1486" y="102" width="9" height="11" fill="#f00"/><text x="1490" y="111" style="fill:#000">1</text>
<rect x="1486" y="407" width="9" height="11" fill="#0000e6"/><text x="1490" y="416">1</text>
<rect x="1486" y="492" width="9" height="11" fill="#22cc22"/><text x="1490" y="501" style="fill:#000">1</text>
<text x="1488" y="536">11</text><text x="1488" y="615">0</text><text x="1491" y="615" style="fill:#c8a060">0</text>
<text x="1488" y="640">1.</text><text x="1488" y="672">1.</text><text x="1488" y="688">1.</text><text x="1488" y="717">1.</text>
<text x="1488" y="734">0.</text><text x="1488" y="789">0.</text><text x="1488" y="829">-0</text>

<!-- time axis -->
<path class="l" stroke="#fff" d="M8.5 832v4M72.5 832v4M136.5 832v4M200.5 832v4M264.5 832v4M328.5 832v4M392.5 832v4M456.5 832v4M520.5 832v4M584.5 832v4M648.5 832v4M712.5 832v4M776.5 832v4M840.5 832v4M904.5 832v4M968.5 832v4M1032.5 832v4M1096.5 832v4M1160.5 832v4M1224.5 832v4M1288.5 832v4M1352.5 832v4M1416.5 832v4M1480.5 832v4"/>
<text x="8" y="844">7 Mar 2018</text>
<text x="72" y="844">7 Mar 09:07</text>
<text x="200" y="844">7 Mar 09:23</text>
<text x="264" y="844">7 Mar 09:31</text>
<text x="328" y="844">7 Mar 09:</text>
<text x="456" y="844">7 Mar 09:55</text>
<text x="520" y="844">7 Mar 10:03</text>
<text x="584" y="844">7 Mar 10:11</text>
<text x="712" y="844">7 Mar 10:27</text>
<text x="776" y="844">7 Mar 10:35</text>
<text x="840" y="844">7 Mar 10:43</text>
<text x="904" y="844">7 Mar 10:51</text>
<text x="968" y="844">7 Mar</text>
<text x="1072" y="844">07</text>
<text x="1096" y="844">7 Mar 11:15</text>
<text x="1160" y="844">7 Mar 11:23</text>
<text x="1296" y="844">Mar 11:39</text>
<text x="1352" y="844">7 Mar 11:47</text>
<text x="1416" y="844">7 Mar 11:55</text>
<text x="1480" y="844">7 M</text>
<g>
<rect x="120" y="833" width="80" height="13" fill="#5c5c5c"/><text x="124" y="844" style="fill:#111" textLength="72" lengthAdjust="spacingAndGlyphs">2018.03.07 09:18</text>
<rect x="368" y="833" width="80" height="13" fill="#5c5c5c"/><text x="372" y="844" style="fill:#111" textLength="72" lengthAdjust="spacingAndGlyphs">2018.03.07 09:49</text>
<rect x="632" y="833" width="80" height="13" fill="#5c5c5c"/><text x="636" y="844" style="fill:#111" textLength="72" lengthAdjust="spacingAndGlyphs">2018.03.07 10:22</text>
<rect x="992" y="833" width="80" height="13" fill="#5c5c5c"/><text x="996" y="844" style="fill:#111" textLength="72" lengthAdjust="spacingAndGlyphs">2018.03.07 11:07</text>
<rect x="1216" y="833" width="80" height="13" fill="#5c5c5c"/><text x="1220" y="844" style="fill:#111" textLength="72" lengthAdjust="spacingAndGlyphs">2018.03.07 11:35</text>
</g>
</svg>
</body></html>
